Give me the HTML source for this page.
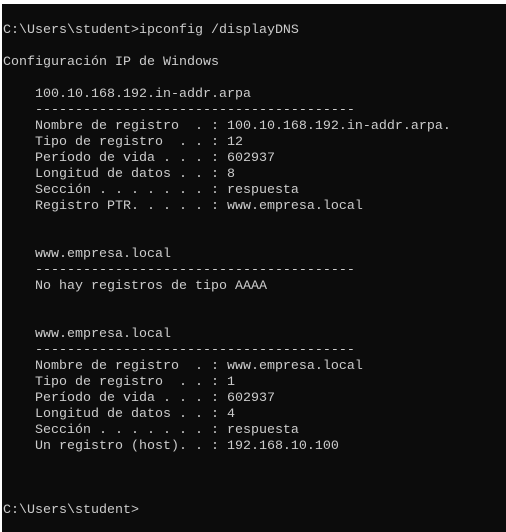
<!DOCTYPE html>
<html><head><meta charset="utf-8"><style>
html,body{margin:0;padding:0;width:506px;height:532px;overflow:hidden;background:#fff}
.c{position:absolute;left:2px;top:4px;width:504px;height:528px;background:#0c0c0c}
pre{position:absolute;left:3px;top:23px;margin:0;font-family:"Liberation Mono",monospace;font-size:13.33px;line-height:16px;color:#cccccc}
</style></head><body><div class="c"></div><pre>C:\Users\student&gt;ipconfig /displayDNS

Configuración IP de Windows

    100.10.168.192.in-addr.arpa
    ----------------------------------------
    Nombre de registro  . : 100.10.168.192.in-addr.arpa.
    Tipo de registro  . . : 12
    Período de vida . . . : 602937
    Longitud de datos . . : 8
    Sección . . . . . . . : respuesta
    Registro PTR. . . . . : www.empresa.local


    www.empresa.local
    ----------------------------------------
    No hay registros de tipo AAAA


    www.empresa.local
    ----------------------------------------
    Nombre de registro  . : www.empresa.local
    Tipo de registro  . . : 1
    Período de vida . . . : 602937
    Longitud de datos . . : 4
    Sección . . . . . . . : respuesta
    Un registro (host). . : 192.168.10.100



C:\Users\student&gt;</pre></body></html>
